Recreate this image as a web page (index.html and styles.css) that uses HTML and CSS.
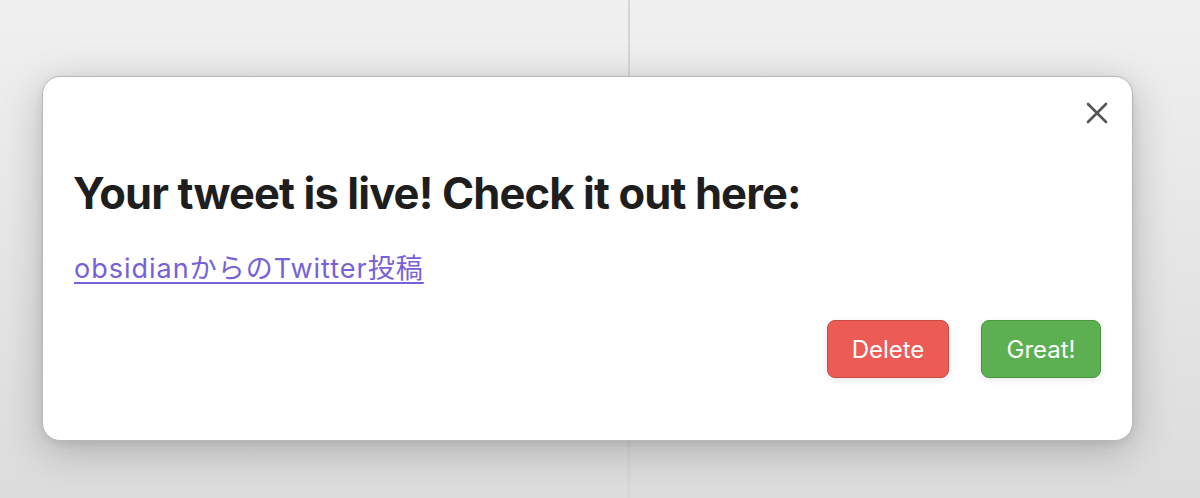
FILE: index.html
```html
<!DOCTYPE html>
<html lang="en">
<head>
  <meta charset="UTF-8" />
  <title>Tweet posted</title>
  <link rel="stylesheet" href="styles.css">
</head>
<body>

<div class="workspace">
  <div class="pane pane-left"></div>
  <div class="pane pane-right"></div>
</div>

<div class="modal">
  <button class="modal-close" aria-label="Close">
    <svg width="22" height="22" viewBox="0 0 22 22">
      <path d="M2 2 L20 20 M20 2 L2 20" stroke="#555" stroke-width="2.6" stroke-linecap="round" fill="none"/>
    </svg>
  </button>

  <h2 class="modal-title">Your tweet is live! Check it out here:</h2>
  <a class="tweet-link" href="#">obsidianからのTwitter投稿</a>

  <div class="modal-buttons">
    <button class="btn btn-delete">Delete</button>
    <button class="btn btn-great">Great!</button>
  </div>
</div>

</body>
</html>
```

FILE: styles.css
```css
body {
  margin: 0;
  font-family: Inter, "Noto Sans", sans-serif;
  background: #e6e6e6;
  height: 498px;
  overflow: hidden;
}
.workspace {
  display: flex;
  height: 498px;
  background: linear-gradient(180deg, #f0f0f0 0%, #e8e8e8 40%, #dcdcdc 100%);
}
.pane-left {
  width: 628px;
  border-right: 2px solid #d6d6d6;
}
.pane-right { flex: 1; }

.modal {
  position: absolute;
  left: 42px; top: 76px;
  width: 1089px; height: 363px;
  background: #fff;
  border: 1px solid #b8b8b8;
  border-radius: 18px;
  box-shadow: 0 10px 40px rgba(0,0,0,0.22), 0 2px 8px rgba(0,0,0,0.08);
}
.modal-close {
  position: absolute;
  top: 25px; right: 24px;
  background: none; border: none; padding: 0;
  width: 22px; height: 22px;
  cursor: pointer;
}
.modal-title {
  margin: 92px 0 0 30px;
  font-size: 43.5px;
  font-weight: 700;
  letter-spacing: -0.02em;
  line-height: 48px;
  color: #1e1e1e;
}
.tweet-link {
  display: inline-block;
  margin: 36px 0 0 31px;
  font-family: Inter, "Noto Sans CJK JP", sans-serif;
  font-size: 27px;
  letter-spacing: 1px;
  line-height: 32px;
  color: #7661d8;
  text-decoration: underline;
  text-decoration-thickness: 2px;
  text-underline-offset: 4px;
}
.modal-buttons {
  display: flex;
  justify-content: flex-end;
  gap: 32px;
  margin: 35px 31px 0 0;
}
.btn {
  height: 58px;
  padding: 0;
  font-family: Inter, sans-serif;
  font-size: 24px;
  color: #fff;
  border-radius: 8px;
  cursor: pointer;
  box-shadow: 0 2px 6px rgba(0,0,0,0.1);
}
.btn-delete {
  width: 122px;
  background: #ec5b54;
  border: 1px solid #c84a44;
}
.btn-great {
  width: 120px;
  background: #5cb052;
  border: 1px solid #4a9441;
}
```
